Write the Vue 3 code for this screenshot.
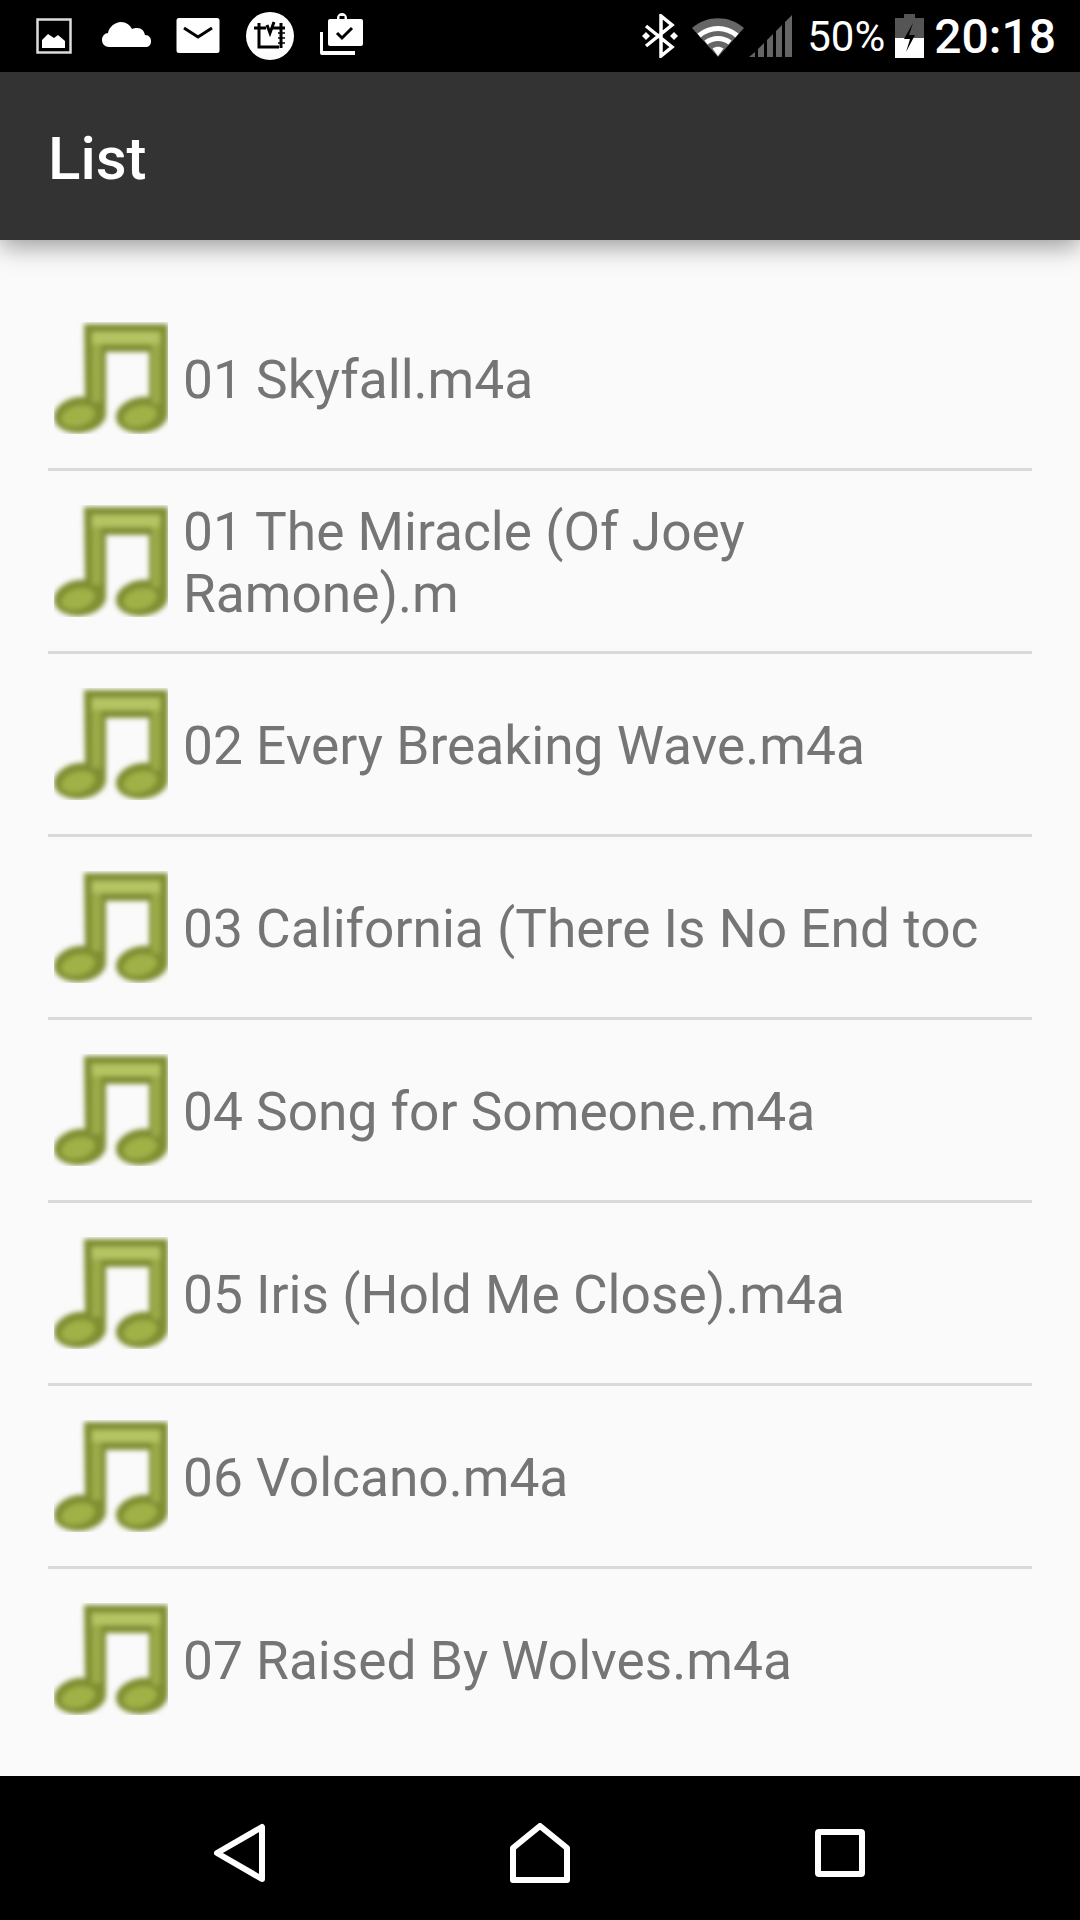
<script setup>
const songs = [
  "01 Skyfall.m4a",
  "01 The Miracle (Of Joey Ramone).m",
  "02 Every Breaking Wave.m4a",
  "03 California (There Is No End toc",
  "04 Song for Someone.m4a",
  "05 Iris (Hold Me Close).m4a",
  "06 Volcano.m4a",
  "07 Raised By Wolves.m4a",
];
</script>

<template>
  <div class="screen">
    <div class="status">
      <div class="status-left">
        <svg class="slot" viewBox="0 0 72 72">
          <rect x="19.5" y="19.5" width="33" height="33" fill="none" stroke="#ddd" stroke-width="2.5" />
          <path d="M24 48v-8l6-6 6 4 4-3 7 6v7z" fill="#fff" />
        </svg>
        <svg class="slot" viewBox="0 0 72 72">
          <path d="M19 47c-4 0-7-3-7-7 0-4 3-7 6-7 1-6 7-11 13-11 5 0 9 3 11 7 2-1 3-1 5-1 5 0 7 3 8 7 4 0 6 3 6 6 0 4-2 6-6 6z" fill="#fff" />
        </svg>
        <svg class="slot" viewBox="0 0 72 72">
          <rect x="14.500" y="18" width="43" height="35" rx="2.500" fill="#fff" />
          <path d="M22 28l14 9 14-9" fill="none" stroke="#000" stroke-width="3" />
        </svg>
        <svg class="slot" viewBox="0 0 72 72">
          <circle cx="36" cy="36" r="24" fill="#fff" />
          <path d="M20 28h12M25 23v24h20M33 25l3 8 4-11M37 28h14M47 23v25" fill="none" stroke="#000" stroke-width="3" />
          <path d="M44 33h7M44 38h7M44 43h7" fill="none" stroke="#000" stroke-width="1.500" />
        </svg>
        <svg class="slot" viewBox="0 0 72 72">
          <path d="M14 32h3v19h32v4H16a2 2 0 0 1-2-2z" fill="#fff" />
          <path d="M22 21a2 2 0 0 1 2-2h7v-1a5 5 0 0 1 10 0v1h14a2 2 0 0 1 2 2v23a2 2 0 0 1-2 2H24a2 2 0 0 1-2-2z" fill="#fff" />
          <rect x="33.500" y="16" width="5" height="3" fill="#000" />
          <path d="M31 33l5 5 10-10" fill="none" stroke="#000" stroke-width="3" />
        </svg>
      </div>
      <div class="status-right">
        <svg class="bt" viewBox="0 0 38 44">
          <path d="M5 12l26 21-11 9V2l11 9L5 32" fill="none" stroke="#fff" stroke-width="3.500" />
          <path d="M5 18l4 4-4 4-4-4zM33 18l4 4-4 4-4-4z" fill="#fff" />
        </svg>
        <svg class="wifi" viewBox="0 0 52 42">
          <path d="M0 13C15 0 37 0 52 13L26 42z" fill="#666" />
          <path d="M7 20.500C18 11 34 11 45 20.500" fill="none" stroke="#fff" stroke-width="5" />
          <path d="M14 27.500C21 22 31 22 38 27.500" fill="none" stroke="#fff" stroke-width="5" />
          <path d="M20.500 33.500C24 31 28 31 31.500 33.500L26 41z" fill="#fff" />
        </svg>
        <svg class="signal" viewBox="0 0 43 42">
          <path d="M0 42L6 37v5zM9 42V34l6-6v14zM18 42V25l6-6v23zM27 42V16l6-6v32zM36 42V7l7-7v42z" fill="#666" />
        </svg>
        <span class="pct">50%</span>
        <svg class="batt" viewBox="0 0 29 44">
          <path d="M9 0h11v4h9v20H0V4h9z" fill="#555" />
          <path d="M0 24h29v20H0z" fill="#fff" />
          <path d="M18 9L9 25h6l-4 13 9-17h-6z" fill="#000" />
        </svg>
        <span class="time">20:18</span>
      </div>
    </div>

    <header class="toolbar">List</header>

    <ul class="list">
      <li v-for="song in songs" :key="song" class="row">
        <svg class="note" viewBox="0 0 114 112">
          <g filter="url(#soft)">
            <path d="M30 2h84v90c0 10-13 19-28 19-11 0-24-5-24-16 0-12 17-22 33-20V30H52v62c0 10-13 19-28 19-11 0-24-5-24-16 0-12 17-22 31-20z" fill="#7f8f33" />
            <path d="M38 10h68v12H38z" fill="#b5c463" />
            <path d="M38 22h9v58h-9zM98 22h8v60h-8z" fill="#9cac4a" />
            <ellipse cx="24" cy="94" rx="17" ry="10" fill="#a0b146" transform="rotate(-15 24 94)" />
            <ellipse cx="86" cy="94" rx="17" ry="10" fill="#a0b146" transform="rotate(-15 86 94)" />
          </g>
          <defs>
            <filter id="soft" x="-10%" y="-10%" width="120%" height="120%"><feGaussianBlur stdDeviation="2.500" /></filter>
          </defs>
        </svg>
        <span class="title">{{ song }}</span>
      </li>
    </ul>

    <nav class="nav">
      <div class="nav-slot">
        <svg class="nav-back" viewBox="0 0 54 60">
          <path d="M49 4v52L4 30z" fill="none" stroke="#fff" stroke-width="6" stroke-linejoin="round" />
        </svg>
      </div>
      <div class="nav-slot">
        <svg class="nav-home" viewBox="0 0 60 60">
          <path d="M3 57V25L30 3l27 22v32z" fill="none" stroke="#fff" stroke-width="6" stroke-linejoin="round" />
        </svg>
      </div>
      <div class="nav-slot">
        <svg class="nav-square" viewBox="0 0 50 48">
          <rect x="3" y="3" width="44" height="42" rx="1" fill="none" stroke="#fff" stroke-width="6" />
        </svg>
      </div>
    </nav>
  </div>
</template>

<style>
html,
body {
  margin: 0;
  background: #fafafa;
}
</style>

<style scoped>
.screen {
  width: 1080px;
  height: 1920px;
  display: flex;
  flex-direction: column;
  background: #fafafa;
  font-family: Roboto, "Liberation Sans", sans-serif;
  overflow: hidden;
}

.status {
  height: 72px;
  flex: none;
  background: #000;
  display: flex;
  justify-content: space-between;
  align-items: center;
  padding: 0 24px 0 18px;
  box-sizing: border-box;
}

.status-left,
.status-right {
  display: flex;
  align-items: center;
}

.slot {
  width: 72px;
  height: 72px;
  display: block;
}

.bt {
  width: 38px;
  height: 44px;
  margin-right: 13px;
}

.wifi {
  width: 52px;
  height: 42px;
  margin-right: 5px;
}

.signal {
  width: 43px;
  height: 42px;
  margin-right: 15px;
}

.pct {
  color: #fff;
  font-size: 42px;
  margin-right: 10px;
}

.batt {
  width: 29px;
  height: 44px;
  margin-right: 10px;
}

.time {
  color: #fff;
  font-size: 48px;
  font-weight: 500;
}

.toolbar {
  height: 168px;
  flex: none;
  background: #333;
  color: #fff;
  font-size: 60px;
  font-weight: 500;
  display: flex;
  align-items: center;
  padding: 5px 0 0 48px;
  box-sizing: border-box;
  box-shadow: 0 6px 24px rgba(0, 0, 0, 0.4);
  position: relative;
}

.list {
  flex: 1;
  list-style: none;
  margin: 0;
  padding: 48px 48px 0;
}

.row {
  min-height: 180px;
  display: flex;
  align-items: center;
  border-bottom: 3px solid #d9d9d9;
}

.row:last-child {
  border-bottom: none;
}

.note {
  width: 114px;
  height: 112px;
  flex: none;
  margin: 0 15px 0 6px;
}

.title {
  font-size: 53.25px;
  line-height: 62px;
  color: #757575;
  max-width: 820px;
  padding-top: 3px;
}

.nav {
  height: 144px;
  flex: none;
  background: #000;
  display: flex;
  justify-content: center;
  align-items: center;
  padding-top: 10px;
  box-sizing: border-box;
}

.nav-slot {
  width: 300px;
  display: flex;
  justify-content: center;
  align-items: center;
}

.nav-back {
  width: 54px;
  height: 60px;
}

.nav-home {
  width: 60px;
  height: 60px;
}

.nav-square {
  width: 50px;
  height: 48px;
}
</style>
